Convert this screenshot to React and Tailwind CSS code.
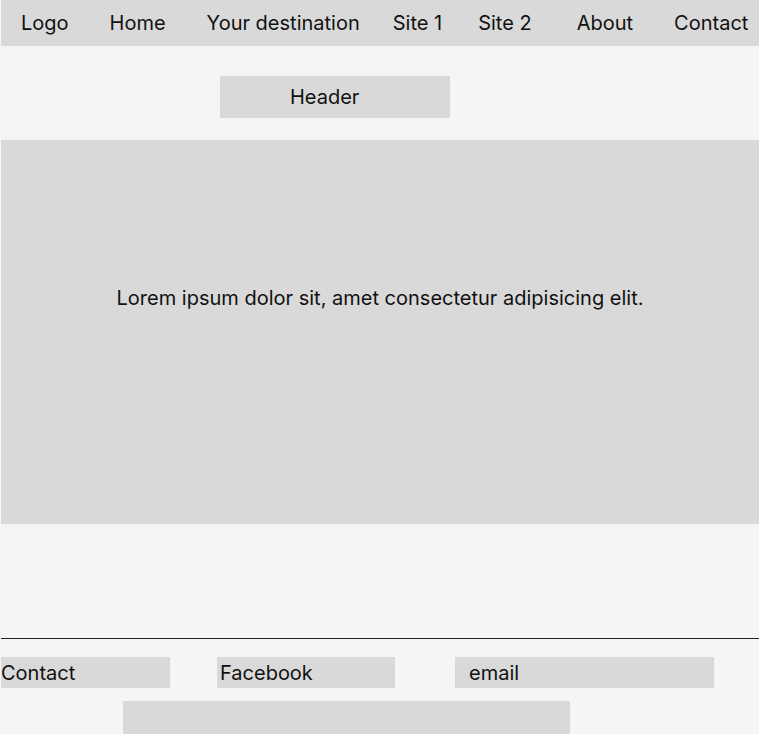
const navItems = [
  { label: 'Logo', ml: 'ml-[20px]' },
  { label: 'Home', ml: 'ml-[41px]' },
  { label: 'Your destination', ml: 'ml-[41px]' },
  { label: 'Site 1', ml: 'ml-[33px]' },
  { label: 'Site 2', ml: 'ml-[36px]' },
  { label: 'About', ml: 'ml-[45px]' },
  { label: 'Contact', ml: 'ml-[41px]' },
]

export default function App() {
  return (
    <div className="min-h-screen overflow-hidden bg-[#f5f5f5] pl-px font-['Inter',sans-serif] text-[20px] text-[#111]">
      <nav className="flex h-[46px] items-center bg-[#d9d9d9]">
        {navItems.map((item) => (
          <span key={item.label} className={`${item.ml} whitespace-nowrap`}>
            {item.label}
          </span>
        ))}
      </nav>

      <header className="ml-[219px] mt-[30px] flex h-[42px] w-[230px] items-center bg-[#d9d9d9] pl-[70px]">
        Header
      </header>

      <main className="mt-[22px] flex h-[384px] items-center justify-center bg-[#d9d9d9] pb-[68px]">
        Lorem ipsum dolor sit, amet consectetur adipisicing elit.
      </main>

      <div className="mt-[114px] h-px bg-[#222]" />

      <footer>
        <div className="mt-[18px] flex h-[31px]">
          <div className="flex w-[169px] items-center bg-[#d9d9d9]">Contact</div>
          <div className="ml-[47px] flex w-[178px] items-center bg-[#d9d9d9] pl-[3px]">Facebook</div>
          <div className="ml-[60px] flex w-[259px] items-center bg-[#d9d9d9] pl-[14px]">email</div>
        </div>
        <div className="ml-[122px] mt-[13px] h-[40px] w-[447px] bg-[#d9d9d9]" />
      </footer>
    </div>
  )
}
